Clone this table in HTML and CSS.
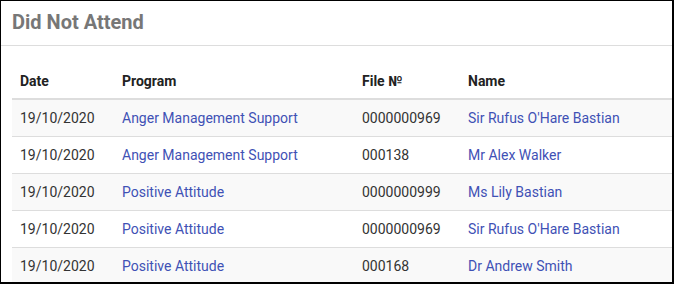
FILE: index.html
```html
<!DOCTYPE html>
<html lang="en">
<head>
  <meta charset="UTF-8" />
  <title>Did Not Attend</title>
  <link rel="stylesheet" href="styles.css">
</head>
<body>

  <div class="panel">
    <div class="panel-heading">
      <h3>Did Not Attend</h3>
    </div>

    <div class="panel-body">
      <table class="table">
        <thead>
          <tr>
            <th class="col-date">Date</th>
            <th class="col-program">Program</th>
            <th class="col-file">File №</th>
            <th>Name</th>
          </tr>
        </thead>
        <tbody>
          <tr>
            <td>19/10/2020</td>
            <td><a href="#">Anger Management Support</a></td>
            <td>0000000969</td>
            <td><a href="#">Sir Rufus O'Hare Bastian</a></td>
          </tr>
          <tr>
            <td>19/10/2020</td>
            <td><a href="#">Anger Management Support</a></td>
            <td>000138</td>
            <td><a href="#">Mr Alex Walker</a></td>
          </tr>
          <tr>
            <td>19/10/2020</td>
            <td><a href="#">Positive Attitude</a></td>
            <td>0000000999</td>
            <td><a href="#">Ms Lily Bastian</a></td>
          </tr>
          <tr>
            <td>19/10/2020</td>
            <td><a href="#">Positive Attitude</a></td>
            <td>0000000969</td>
            <td><a href="#">Sir Rufus O'Hare Bastian</a></td>
          </tr>
          <tr>
            <td>19/10/2020</td>
            <td><a href="#">Positive Attitude</a></td>
            <td>000168</td>
            <td><a href="#">Dr Andrew Smith</a></td>
          </tr>
        </tbody>
      </table>
    </div>
  </div>

</body>
</html>
```

FILE: styles.css
```css
body {
  margin: 0;
  font-family: Roboto, "Liberation Sans", sans-serif;
  font-size: 14px;
  color: #333;
  background: #fff;
  overflow: hidden;
}

.panel {
  width: 671px;
  height: 281px;
  border: 1px solid #000;
  border-right-width: 2px;
  border-bottom-width: 2px;
  overflow: hidden;
  background: #fff;
}

.panel-heading {
  height: 45px;
  box-sizing: border-box;
  padding: 9px 11px 0;
  border-bottom: 1px solid #ddd;
}

.panel-heading h3 {
  margin: 0;
  font-size: 20px;
  line-height: 24px;
  font-weight: 700;
  color: #777;
}

.panel-body {
  padding: 17px 0 0 11px;
}

.table {
  width: 700px;
  border-collapse: collapse;
}

.table th,
.table td {
  text-align: left;
  padding: 8px 8px;
  line-height: 20px;
  white-space: nowrap;
}

.table th {
  padding-bottom: 7px;
  font-weight: 700;
  color: #222;
  border-bottom: 2px solid #ddd;
}

.table td {
  border-bottom: 1px solid #ddd;
}

.table tbody tr:nth-child(odd) {
  background-color: #f9f9f9;
}

.col-date { width: 86px; }
.col-program { width: 224px; }
.col-file { width: 90px; }

.table a {
  color: #3f51b5;
  text-decoration: none;
}
```
